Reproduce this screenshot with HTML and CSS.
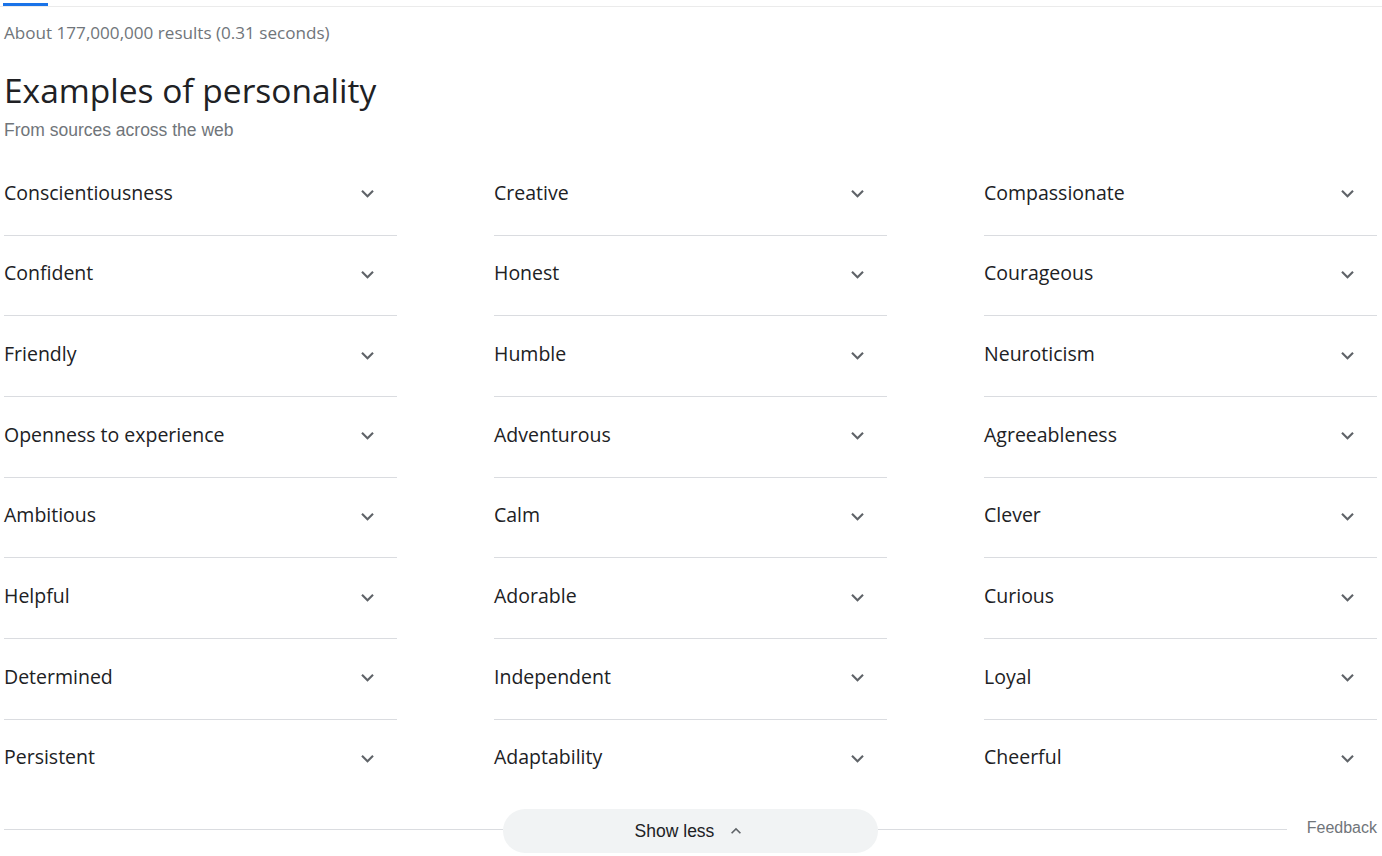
FILE: index.html
```html
<!DOCTYPE html>
<html lang="en">
<head>
<meta charset="utf-8">
<title>Examples of personality</title>
<link rel="stylesheet" href="styles.css">
</head>
<body>
<div class="tabs"><div class="tab-indicator"></div></div>
<div class="page">
  <div class="stats">About 177,000,000 results (0.31 seconds)</div>
  <h1 class="title">Examples of personality</h1>
  <div class="subtitle">From sources across the web</div>
  <div class="grid">
    <div class="item"><span>Conscientiousness</span><svg class="chev" viewBox="0 0 24 24"><path d="M16.59 8.59L12 13.17 7.41 8.59 6 10l6 6 6-6z"/></svg></div>
    <div class="item"><span>Creative</span><svg class="chev" viewBox="0 0 24 24"><path d="M16.59 8.59L12 13.17 7.41 8.59 6 10l6 6 6-6z"/></svg></div>
    <div class="item"><span>Compassionate</span><svg class="chev" viewBox="0 0 24 24"><path d="M16.59 8.59L12 13.17 7.41 8.59 6 10l6 6 6-6z"/></svg></div>
    <div class="item"><span>Confident</span><svg class="chev" viewBox="0 0 24 24"><path d="M16.59 8.59L12 13.17 7.41 8.59 6 10l6 6 6-6z"/></svg></div>
    <div class="item"><span>Honest</span><svg class="chev" viewBox="0 0 24 24"><path d="M16.59 8.59L12 13.17 7.41 8.59 6 10l6 6 6-6z"/></svg></div>
    <div class="item"><span>Courageous</span><svg class="chev" viewBox="0 0 24 24"><path d="M16.59 8.59L12 13.17 7.41 8.59 6 10l6 6 6-6z"/></svg></div>
    <div class="item"><span>Friendly</span><svg class="chev" viewBox="0 0 24 24"><path d="M16.59 8.59L12 13.17 7.41 8.59 6 10l6 6 6-6z"/></svg></div>
    <div class="item"><span>Humble</span><svg class="chev" viewBox="0 0 24 24"><path d="M16.59 8.59L12 13.17 7.41 8.59 6 10l6 6 6-6z"/></svg></div>
    <div class="item"><span>Neuroticism</span><svg class="chev" viewBox="0 0 24 24"><path d="M16.59 8.59L12 13.17 7.41 8.59 6 10l6 6 6-6z"/></svg></div>
    <div class="item"><span>Openness to experience</span><svg class="chev" viewBox="0 0 24 24"><path d="M16.59 8.59L12 13.17 7.41 8.59 6 10l6 6 6-6z"/></svg></div>
    <div class="item"><span>Adventurous</span><svg class="chev" viewBox="0 0 24 24"><path d="M16.59 8.59L12 13.17 7.41 8.59 6 10l6 6 6-6z"/></svg></div>
    <div class="item"><span>Agreeableness</span><svg class="chev" viewBox="0 0 24 24"><path d="M16.59 8.59L12 13.17 7.41 8.59 6 10l6 6 6-6z"/></svg></div>
    <div class="item"><span>Ambitious</span><svg class="chev" viewBox="0 0 24 24"><path d="M16.59 8.59L12 13.17 7.41 8.59 6 10l6 6 6-6z"/></svg></div>
    <div class="item"><span>Calm</span><svg class="chev" viewBox="0 0 24 24"><path d="M16.59 8.59L12 13.17 7.41 8.59 6 10l6 6 6-6z"/></svg></div>
    <div class="item"><span>Clever</span><svg class="chev" viewBox="0 0 24 24"><path d="M16.59 8.59L12 13.17 7.41 8.59 6 10l6 6 6-6z"/></svg></div>
    <div class="item"><span>Helpful</span><svg class="chev" viewBox="0 0 24 24"><path d="M16.59 8.59L12 13.17 7.41 8.59 6 10l6 6 6-6z"/></svg></div>
    <div class="item"><span>Adorable</span><svg class="chev" viewBox="0 0 24 24"><path d="M16.59 8.59L12 13.17 7.41 8.59 6 10l6 6 6-6z"/></svg></div>
    <div class="item"><span>Curious</span><svg class="chev" viewBox="0 0 24 24"><path d="M16.59 8.59L12 13.17 7.41 8.59 6 10l6 6 6-6z"/></svg></div>
    <div class="item"><span>Determined</span><svg class="chev" viewBox="0 0 24 24"><path d="M16.59 8.59L12 13.17 7.41 8.59 6 10l6 6 6-6z"/></svg></div>
    <div class="item"><span>Independent</span><svg class="chev" viewBox="0 0 24 24"><path d="M16.59 8.59L12 13.17 7.41 8.59 6 10l6 6 6-6z"/></svg></div>
    <div class="item"><span>Loyal</span><svg class="chev" viewBox="0 0 24 24"><path d="M16.59 8.59L12 13.17 7.41 8.59 6 10l6 6 6-6z"/></svg></div>
    <div class="item last"><span>Persistent</span><svg class="chev" viewBox="0 0 24 24"><path d="M16.59 8.59L12 13.17 7.41 8.59 6 10l6 6 6-6z"/></svg></div>
    <div class="item last"><span>Adaptability</span><svg class="chev" viewBox="0 0 24 24"><path d="M16.59 8.59L12 13.17 7.41 8.59 6 10l6 6 6-6z"/></svg></div>
    <div class="item last"><span>Cheerful</span><svg class="chev" viewBox="0 0 24 24"><path d="M16.59 8.59L12 13.17 7.41 8.59 6 10l6 6 6-6z"/></svg></div>
  </div>
  <div class="footer">
    <div class="rule"></div>
    <div class="show-less"><span>Show less</span><svg class="chev-up" viewBox="0 0 24 24"><path d="M7.41 15.41L12 10.83l4.59 4.58L18 14l-6-6-6 6z"/></svg></div>
    <div class="footer-right"><div class="rule"></div><span class="feedback">Feedback</span></div>
  </div>
</div>
</body>
</html>
```
FILE: styles.css
```css
* { box-sizing: border-box; }
html, body { margin: 0; padding: 0; background: #fff; }
body { font-family: "Open Sans", Arial, sans-serif; color: #202124; }

.tabs {
  height: 7px;
  padding: 3px 0 0 3px;
  border-bottom: 1px solid #ebebeb;
}
.tab-indicator {
  width: 45px;
  height: 3px;
  background: #1a73e8;
}

.page { padding: 0 5px 0 4px; }

.stats {
  margin-top: 14px;
  font-size: 17.1px;
  line-height: 24px;
  color: #70757a;
}

.title {
  margin: 23px 0 0;
  font-weight: 400;
  font-size: 33.5px;
  line-height: 44px;
  color: #202124;
}

.subtitle {
  margin-top: 6px;
  font-family: Arial, "Liberation Sans", sans-serif;
  font-size: 17.5px;
  line-height: 24px;
  color: #70757a;
}

.grid {
  margin-top: 13px;
  display: grid;
  grid-template-columns: repeat(3, 393px);
  column-gap: 97px;
}
.item {
  height: 80.67px;
  display: flex;
  align-items: center;
  justify-content: space-between;
  padding-right: 18px;
  padding-bottom: 2px;
  border-bottom: 1px solid #dadce0;
  font-size: 19.5px;
  color: #202124;
}
.item span { margin-bottom: 3px; }
.item.last { border-bottom-color: transparent; }
.chev { width: 25px; height: 25px; fill: #5f6368; flex: none; margin-right: -0.5px; }

.footer {
  margin-top: 9px;
  display: flex;
  align-items: center;
  height: 44px;
}
.rule { flex: 1; height: 1px; background: #dadce0; margin-top: -4px; }
.footer-right { flex: 1; display: flex; align-items: center; }
.show-less {
  width: 375px;
  height: 44px;
  border-radius: 22px;
  background: #f1f3f4;
  display: flex;
  align-items: center;
  justify-content: center;
  gap: 12px;
  font-family: Arial, "Liberation Sans", sans-serif;
  font-size: 17.5px;
  color: #202124;
}
.chev-up { width: 20px; height: 20px; fill: #5f6368; flex: none; }
.feedback {
  margin-left: 20px;
  margin-top: -6px;
  font-family: Arial, "Liberation Sans", sans-serif;
  font-size: 16px;
  color: #70757a;
}
```
